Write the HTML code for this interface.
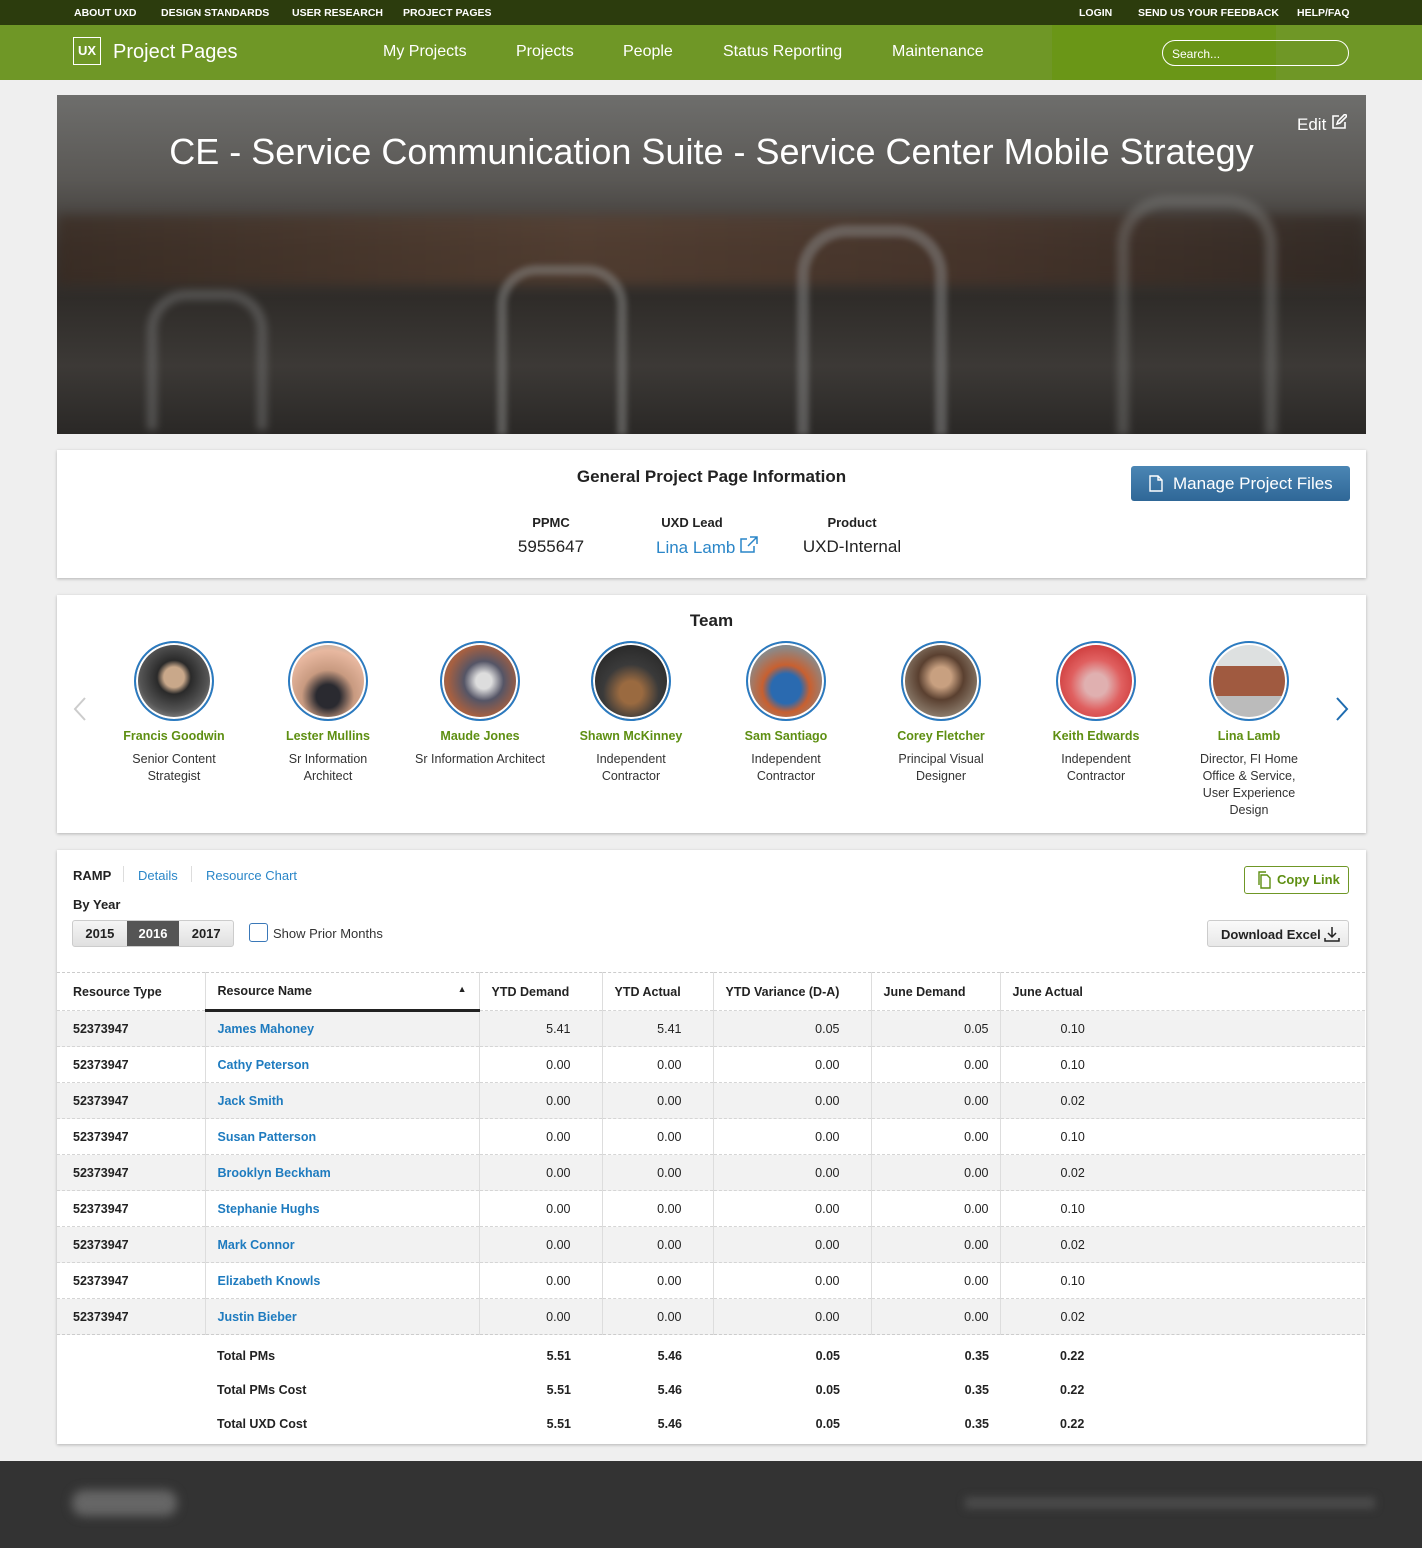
<!DOCTYPE html>
<html><head><meta charset="utf-8"><style>
*{box-sizing:border-box;margin:0;padding:0}
body{width:1422px;height:1548px;background:#efefef;font-family:"Liberation Sans",sans-serif;color:#222;position:relative;overflow:hidden}
.abs{position:absolute}
.top{left:0;top:0;width:1422px;height:25px;background:#2c3c0d;color:#fff;font-size:10.5px;font-weight:bold}
.top span{position:absolute;top:7px}
.nav{left:0;top:25px;width:1422px;height:55px;background:#6f9726;color:#fff}
.nav .l{position:absolute;top:18px;font-size:16px}
.card{background:#fff;box-shadow:0 1px 3px rgba(0,0,0,.25)}
.c{text-align:center}
.mem{position:absolute;top:641px;width:130px;text-align:center;font-size:12.5px;line-height:17px;color:#333}
.mem .av{width:80px;height:80px;border-radius:50%;border:2px solid #2a7ac0;margin:0 auto;box-shadow:inset 0 0 0 2px #fff}
.mem b{display:block;color:#5e8f12;margin-top:7px;margin-bottom:6px;white-space:nowrap}
table{border-collapse:collapse;font-size:12.5px}
.tbl{left:57px;top:972px;width:1308px}
td,th{height:36px;padding:0 12px}
th{text-align:left;font-weight:bold;border-top:1px dashed #ccc;height:38px}
td{border-top:1px dashed #d5d5d5}
tbody tr:nth-child(odd) td{background:#f2f2f2}
td.n{text-align:right;padding-right:31px}
td.m{text-align:right;padding-right:11px}
td.j{padding-left:60px}
td.b{font-weight:bold;padding-left:16px}
td a{color:#1e7bbf;font-weight:bold}
.v{border-right:1px solid #ddd}
tfoot td{border:none;height:34.5px;font-weight:bold;background:#fff!important}
</style></head><body>
<div class="abs top"><span style="left:74px">ABOUT UXD</span><span style="left:161px">DESIGN STANDARDS</span><span style="left:292px">USER RESEARCH</span><span style="left:403px">PROJECT PAGES</span><span style="left:1079px">LOGIN</span><span style="left:1138px">SEND US YOUR FEEDBACK</span><span style="left:1297px">HELP/FAQ</span></div>
<div class="abs nav">
<div class="abs" style="left:1052px;top:0;width:224px;height:55px;background:#6a9617"></div>
<div class="abs" style="left:73px;top:12px;width:28px;height:28px;border:1px solid #fff;font-size:13px;font-weight:bold;text-align:center;line-height:26px">UX</div>
<div class="abs" style="left:113px;top:16px;font-size:20px">Project Pages</div>
<span class="l" style="left:383px">My Projects</span><span class="l" style="left:516px">Projects</span><span class="l" style="left:623px">People</span><span class="l" style="left:723px">Status Reporting</span><span class="l" style="left:892px">Maintenance</span>
<div class="abs" style="left:1162px;top:15px;width:187px;height:26px;border:1px solid #fff;border-radius:13px;font-size:12px;padding:6px 9px">Search...</div>
</div>
<div class="abs" style="left:57px;top:95px;width:1309px;height:339px;background:linear-gradient(180deg,#6e6e6c 0%,#5a5855 25%,#3a3633 45%,#2f2c29 60%,#3c3936 80%,#2a2826 100%);overflow:hidden">
<div class="abs" style="left:0;top:120px;width:1309px;height:70px;background:linear-gradient(90deg,#3a2a20,#5a4030 40%,#4b3428 70%,#302620);opacity:.7;filter:blur(6px)"></div>
<div class="abs" style="left:90px;top:195px;width:120px;height:140px;border:10px solid #777;border-bottom:none;border-radius:40px 40px 0 0;opacity:.5;filter:blur(4px)"></div>
<div class="abs" style="left:440px;top:170px;width:130px;height:170px;border:10px solid #8a8a88;border-bottom:none;border-radius:40px 40px 0 0;opacity:.5;filter:blur(3px)"></div>
<div class="abs" style="left:740px;top:130px;width:150px;height:210px;border:12px solid #888;border-bottom:none;border-radius:50px 50px 0 0;opacity:.5;filter:blur(3px)"></div>
<div class="abs" style="left:1060px;top:100px;width:160px;height:240px;border:12px solid #7a7a78;border-bottom:none;border-radius:50px 50px 0 0;opacity:.45;filter:blur(4px)"></div>
<div class="abs c" style="left:0;top:36px;width:1309px;color:#fff;font-size:36px">CE - Service Communication Suite - Service Center Mobile Strategy</div>
<div class="abs" style="left:1240px;top:19px;color:#fff;font-size:17px">Edit <svg width="16" height="16" viewBox="0 0 16 16" fill="none" stroke="#fff" stroke-width="1.6"><path d="M8 2H2v12h12V8M6 10l1-3 7-7 2 2-7 7z"/></svg></div>
</div>
<div class="abs card" style="left:57px;top:450px;width:1309px;height:128px">
<div class="abs c" style="left:0;top:17px;width:1309px;font-size:17px;font-weight:bold">General Project Page Information</div>
<div class="abs" style="left:1074px;top:16px;width:219px;height:35px;background:linear-gradient(#4b86b4,#2f6797);border-radius:3px;color:#fff;font-size:17px;line-height:35px;padding-left:42px">Manage Project Files</div>
<svg class="abs" style="left:1092px;top:25px" width="14" height="17" viewBox="0 0 14 17" fill="none" stroke="#fff" stroke-width="1.4"><path d="M1 1h8l4 4v11H1zM9 1v4h4"/></svg>
<div class="abs c" style="left:444px;top:65px;width:100px;font-size:13px;font-weight:bold">PPMC</div>
<div class="abs c" style="left:444px;top:87px;width:100px;font-size:17px">5955647</div>
<div class="abs c" style="left:585px;top:65px;width:100px;font-size:13px;font-weight:bold">UXD Lead</div>
<div class="abs" style="left:599px;top:86px;font-size:17px;color:#2a86c8">Lina Lamb <svg width="18" height="17" viewBox="0 0 18 17" fill="none" stroke="#2a86c8" stroke-width="1.5"><path d="M7 3H1v13h13v-6M10 1h7v7M17 1L8 10"/></svg></div>
<div class="abs c" style="left:745px;top:65px;width:100px;font-size:13px;font-weight:bold">Product</div>
<div class="abs c" style="left:734px;top:87px;width:122px;font-size:17px">UXD-Internal</div>
</div>
<div class="abs card" style="left:57px;top:595px;width:1309px;height:238px">
<div class="abs c" style="left:0;top:16px;width:1309px;font-size:17px;font-weight:bold">Team</div>
<svg class="abs" style="left:16px;top:102px" width="14" height="24" viewBox="0 0 14 24" fill="none" stroke="#ccc" stroke-width="2"><path d="M12 1L2 12l10 11"/></svg>
<svg class="abs" style="left:1278px;top:102px" width="14" height="24" viewBox="0 0 14 24" fill="none" stroke="#1e6cb0" stroke-width="2"><path d="M2 1l10 11L2 23"/></svg>
</div>
<div class="mem" style="left:109px"><div class="av" style="background:radial-gradient(circle at 50% 45%,#c9a88a 0 18%,#2a2a2a 30%,#555 60%,#ccc 100%)"></div><b>Francis Goodwin</b>Senior Content Strategist</div>
<div class="mem" style="left:273px;width:110px"><div class="av" style="background:radial-gradient(circle at 50% 70%,#2a2a30 0 18%,#c89a80 40%,#e8b8a0 70%,#8aa 100%)"></div><b>Lester Mullins</b>Sr Information Architect</div>
<div class="mem" style="left:405px;width:150px"><div class="av" style="background:radial-gradient(circle at 55% 50%,#ddd 0 14%,#556 35%,#a86040 65%,#5a7a9a 100%)"></div><b>Maude Jones</b>Sr Information Architect</div>
<div class="mem" style="left:566px"><div class="av" style="background:radial-gradient(circle at 50% 65%,#9a6a40 0 18%,#3a3a3a 45%,#1e1e1e 100%)"></div><b>Shawn McKinney</b>Independent Contractor</div>
<div class="mem" style="left:721px"><div class="av" style="background:radial-gradient(circle at 50% 60%,#2a6ab0 0 25%,#c86030 40%,#8a8a8a 70%,#667 100%)"></div><b>Sam Santiago</b>Independent Contractor</div>
<div class="mem" style="left:876px"><div class="av" style="background:radial-gradient(circle at 50% 45%,#c8a080 0 18%,#5a4030 40%,#8a7a6a 70%,#ccc 100%)"></div><b>Corey Fletcher</b>Principal Visual Designer</div>
<div class="mem" style="left:1031px"><div class="av" style="background:radial-gradient(circle at 50% 55%,#e0b0b0 0 20%,#e06060 45%,#d04040 70%,#f0d0d0 100%)"></div><b>Keith Edwards</b>Independent Contractor</div>
<div class="mem" style="left:1192px;width:114px"><div class="av" style="background:linear-gradient(180deg,#dde0e0 0 30%,#a05a40 30% 70%,#bbb 70%)"></div><b>Lina Lamb</b>Director, FI Home Office &amp; Service, User Experience Design</div>
<div class="abs card" style="left:57px;top:850px;width:1309px;height:594px"></div>
<div class="abs" style="left:73px;top:868px;font-size:13px;font-weight:bold">RAMP</div>
<div class="abs" style="left:123px;top:866px;width:1px;height:16px;background:#ddd"></div>
<div class="abs" style="left:138px;top:868px;font-size:13px;color:#2a86c8">Details</div>
<div class="abs" style="left:191px;top:866px;width:1px;height:16px;background:#ddd"></div>
<div class="abs" style="left:206px;top:868px;font-size:13px;color:#2a86c8">Resource Chart</div>
<div class="abs" style="left:73px;top:897px;font-size:13px;font-weight:bold">By Year</div>
<div class="abs" style="left:72px;top:920px;width:162px;height:27px;border:1px solid #ccc;border-radius:3px;background:linear-gradient(#f5f5f5,#e0e0e0);font-size:13px;font-weight:bold;display:flex">
<div style="width:54px;text-align:center;line-height:26px">2015</div><div style="width:53px;text-align:center;line-height:26px;background:#555;color:#fff">2016</div><div style="width:54px;text-align:center;line-height:26px">2017</div></div>
<div class="abs" style="left:249px;top:923px;width:19px;height:19px;border:1.5px solid #3a78b8;border-radius:3px"></div>
<div class="abs" style="left:273px;top:926px;font-size:13px;color:#333">Show Prior Months</div>
<div class="abs" style="left:1244px;top:866px;width:105px;height:28px;border:1px solid #6f9726;border-radius:3px;color:#5e8f12;font-size:13px;font-weight:bold;line-height:26px;padding-left:32px">Copy Link</div>
<svg class="abs" style="left:1257px;top:871px" width="15" height="18" viewBox="0 0 15 18" fill="none" stroke="#5e8f12" stroke-width="1.4"><path d="M4 4h6l3 3v10H4zM2 14V1h7"/></svg>
<div class="abs" style="left:1207px;top:920px;width:142px;height:27px;border:1px solid #ccc;border-radius:3px;background:linear-gradient(#fafafa,#e8e8e8);font-size:13px;font-weight:bold;line-height:27px;padding-left:13px">Download Excel</div>
<svg class="abs" style="left:1324px;top:926px" width="16" height="16" viewBox="0 0 16 16" fill="none" stroke="#222" stroke-width="1.5"><path d="M8 1v10M4 7l4 4 4-4M1 12v3h14v-3"/></svg>
<table class="abs tbl">
<colgroup><col style="width:148px"><col style="width:274px"><col style="width:123px"><col style="width:111px"><col style="width:158px"><col style="width:129px"><col></colgroup>
<thead><tr><th style="padding-left:16px" class="v">Resource Type</th><th class="v" style="border-bottom:3px solid #222">Resource Name<span style="float:right;font-size:9px">&#9650;</span></th><th class="v">YTD Demand</th><th class="v">YTD Actual</th><th class="v">YTD Variance (D-A)</th><th class="v">June Demand</th><th>June Actual</th></tr></thead>
<tbody>
<tr><td class="b v">52373947</td><td class="v"><a>James Mahoney</a></td><td class="n v">5.41</td><td class="n v">5.41</td><td class="n v">0.05</td><td class="m v">0.05</td><td class="j">0.10</td></tr>
<tr><td class="b v">52373947</td><td class="v"><a>Cathy Peterson</a></td><td class="n v">0.00</td><td class="n v">0.00</td><td class="n v">0.00</td><td class="m v">0.00</td><td class="j">0.10</td></tr>
<tr><td class="b v">52373947</td><td class="v"><a>Jack Smith</a></td><td class="n v">0.00</td><td class="n v">0.00</td><td class="n v">0.00</td><td class="m v">0.00</td><td class="j">0.02</td></tr>
<tr><td class="b v">52373947</td><td class="v"><a>Susan Patterson</a></td><td class="n v">0.00</td><td class="n v">0.00</td><td class="n v">0.00</td><td class="m v">0.00</td><td class="j">0.10</td></tr>
<tr><td class="b v">52373947</td><td class="v"><a>Brooklyn Beckham</a></td><td class="n v">0.00</td><td class="n v">0.00</td><td class="n v">0.00</td><td class="m v">0.00</td><td class="j">0.02</td></tr>
<tr><td class="b v">52373947</td><td class="v"><a>Stephanie Hughs</a></td><td class="n v">0.00</td><td class="n v">0.00</td><td class="n v">0.00</td><td class="m v">0.00</td><td class="j">0.10</td></tr>
<tr><td class="b v">52373947</td><td class="v"><a>Mark Connor</a></td><td class="n v">0.00</td><td class="n v">0.00</td><td class="n v">0.00</td><td class="m v">0.00</td><td class="j">0.02</td></tr>
<tr><td class="b v">52373947</td><td class="v"><a>Elizabeth Knowls</a></td><td class="n v">0.00</td><td class="n v">0.00</td><td class="n v">0.00</td><td class="m v">0.00</td><td class="j">0.10</td></tr>
<tr><td class="b v">52373947</td><td class="v"><a>Justin Bieber</a></td><td class="n v">0.00</td><td class="n v">0.00</td><td class="n v">0.00</td><td class="m v">0.00</td><td class="j">0.02</td></tr>
</tbody>
<tfoot>
<tr><td style="border-top:1px dashed #ccc;height:38px;padding-top:4px"></td><td style="border-top:1px dashed #ccc;padding-top:4px">Total PMs</td><td class="n" style="border-top:1px dashed #ccc;padding-top:4px">5.51</td><td class="n" style="border-top:1px dashed #ccc;padding-top:4px">5.46</td><td class="n" style="border-top:1px dashed #ccc;padding-top:4px">0.05</td><td class="m" style="border-top:1px dashed #ccc;padding-top:4px">0.35</td><td class="j" style="border-top:1px dashed #ccc;padding-top:4px">0.22</td></tr>
<tr><td></td><td>Total PMs Cost</td><td class="n">5.51</td><td class="n">5.46</td><td class="n">0.05</td><td class="m">0.35</td><td class="j">0.22</td></tr>
<tr><td></td><td>Total UXD Cost</td><td class="n">5.51</td><td class="n">5.46</td><td class="n">0.05</td><td class="m">0.35</td><td class="j">0.22</td></tr>
</tfoot>
</table>
<div class="abs" style="left:0;top:1461px;width:1422px;height:87px;background:#333"></div>
<div class="abs" style="left:72px;top:1490px;width:105px;height:26px;background:#666;border-radius:12px;filter:blur(5px)"></div>
<div class="abs" style="left:965px;top:1497px;width:410px;height:12px;background:#4a4a4a;filter:blur(4px)"></div>
</body></html>
